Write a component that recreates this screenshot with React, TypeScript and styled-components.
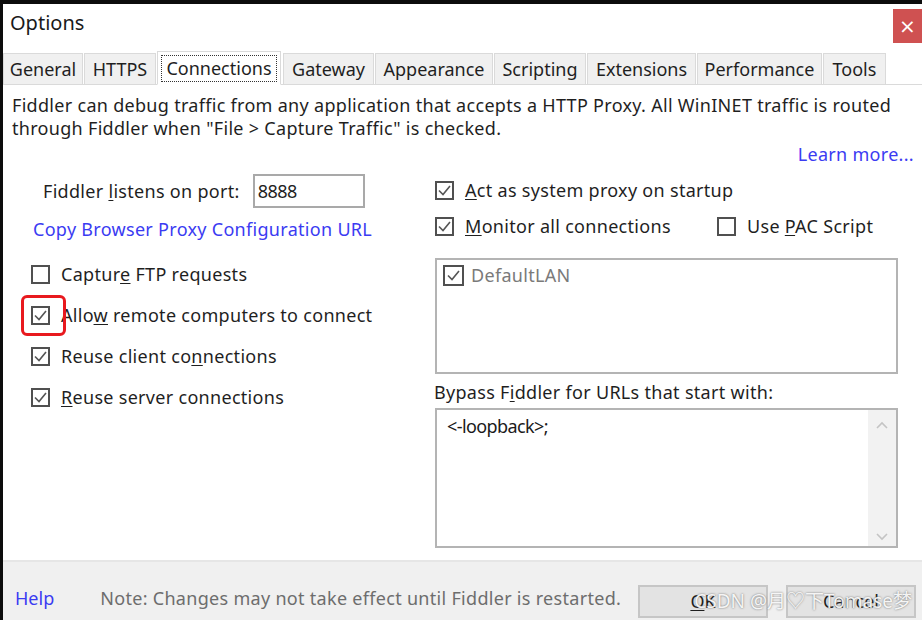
import React from "react";
import styled, { createGlobalStyle } from "styled-components";

const GlobalStyle = createGlobalStyle`
  html, body {
    margin: 0;
    padding: 0;
    background: #0c0c0c;
  }
  body {
    font-family: "Noto Sans", "Open Sans", sans-serif;
    color: #1f1f1f;
  }
`;

const Window = styled.div`
  position: relative;
  margin: 4px 0 0 3px;
  width: 919px;
  height: 616px;
  background: #ffffff;
  display: flex;
  flex-direction: column;
  overflow: hidden;
`;

const TitleBar = styled.div`
  height: 48px;
  display: flex;
  align-items: flex-start;
`;

const Title = styled.div`
  font-size: 20px;
  padding: 5px 0 0 7px;
  color: #1a1a1a;
`;

const CloseButton = styled.div`
  margin-left: auto;
  margin-top: 5px;
  width: 29px;
  height: 34px;
  background: #cf5151;
  color: #fff;
  font-size: 20px;
  display: flex;
  align-items: center;
  justify-content: center;
  font-family: "DejaVu Sans", sans-serif;
`;

const TabStrip = styled.div`
  height: 32px;
  display: flex;
  align-items: flex-end;
  border-bottom: 1px solid #dadada;
`;

const Tab = styled.div<{ $active?: boolean; $w: number }>`
  width: ${(p) => p.$w}px;
  height: ${(p) => (p.$active ? 34 : 31)}px;
  box-sizing: border-box;
  background: ${(p) => (p.$active ? "#ffffff" : "#f0f0f0")};
  border: 1px solid #dadada;
  border-bottom: ${(p) => (p.$active ? "1px solid #ffffff" : "none")};
  margin-right: ${(p) => (p.$active ? 2 : 1)}px;
  margin-bottom: ${(p) => (p.$active ? -1 : 0)}px;
  font-size: 18px;
  display: flex;
  align-items: center;
  justify-content: center;
  color: #1f1f1f;
  position: relative;
`;

const FocusBox = styled.span`
  border: 1px dotted #333;
  padding: 0 4px 1px;
  line-height: 24px;
`;

const Body = styled.div`
  flex: 1;
  padding: 9px 8px 0 9px;
  display: flex;
  flex-direction: column;
  letter-spacing: 0.3px;
`;

const Description = styled.p`
  margin: 0;
  font-size: 18px;
  line-height: 23px;
`;

const LearnRow = styled.div`
  display: flex;
  justify-content: flex-end;
  margin-top: 3px;
`;

const LinkText = styled.span`
  color: #3b3bf2;
  font-size: 18px;
  line-height: 22px;
`;

const Columns = styled.div`
  display: grid;
  grid-template-columns: 423px 463px;
  margin-top: 9px;
`;

const LeftColumn = styled.div`
  display: flex;
  flex-direction: column;
  padding-left: 19px;
`;

const PortRow = styled.div`
  display: flex;
  align-items: center;
  padding-left: 12px;
  font-size: 18px;
`;

const PortInput = styled.div`
  margin-left: 13px;
  width: 112px;
  height: 34px;
  box-sizing: border-box;
  border: 2px solid #a9a9a9;
  padding-left: 3px;
  display: flex;
  align-items: center;
  font-size: 18px;
  letter-spacing: -0.5px;
`;

const CopyLink = styled(LinkText)`
  margin-top: 10px;
  padding-left: 2px;
`;

const CheckList = styled.div`
  display: flex;
  flex-direction: column;
  gap: 19px;
  margin-top: 23px;
`;

const CheckRow = styled.label<{ $muted?: boolean }>`
  display: flex;
  align-items: center;
  gap: 11px;
  font-size: 18px;
  line-height: 22px;
  color: ${(p) => (p.$muted ? "#7a7a7a" : "#1f1f1f")};
  position: relative;
`;

const Box = styled.span<{ $size?: number }>`
  width: ${(p) => p.$size ?? 19}px;
  height: ${(p) => p.$size ?? 19}px;
  box-sizing: border-box;
  border: 2px solid #505050;
  background: #fff;
  display: flex;
  align-items: center;
  justify-content: center;
  flex-shrink: 0;
`;

const Highlight = styled.span`
  position: absolute;
  left: -10px;
  top: -9px;
  width: 45px;
  height: 41px;
  box-sizing: border-box;
  border: 3px solid #e8191e;
  border-radius: 6px;
`;

const RightColumn = styled.div`
  display: flex;
  flex-direction: column;
`;

const RightRow = styled.div<{ $first?: boolean }>`
  display: flex;
  align-items: center;
  margin-top: ${(p) => (p.$first ? 5 : 14)}px;
`;

const PacSlot = styled.div`
  margin-left: auto;
  width: 181px;
`;

const ListBox = styled.div`
  margin-top: 21px;
  height: 116px;
  box-sizing: border-box;
  border: 2px solid #b4b4b4;
  padding: 4px 6px;
`;

const FieldLabel = styled.div`
  margin-top: 6px;
  font-size: 18px;
  line-height: 24px;
  margin-left: -1px;
`;

const TextArea = styled.div`
  margin-top: 4px;
  height: 140px;
  box-sizing: border-box;
  border: 2px solid #b4b4b4;
  display: flex;
`;

const TextContent = styled.div`
  flex: 1;
  padding: 4px 10px;
  font-size: 18px;
  letter-spacing: -0.6px;
  color: #1a1a1a;
`;

const ScrollLane = styled.div`
  width: 28px;
  background: #f2f2f2;
  display: flex;
  flex-direction: column;
  justify-content: space-between;
  align-items: center;
  padding: 10px 0 4px;
`;

const Footer = styled.div`
  height: 58px;
  border-top: 2px solid #e6e6e6;
  background: #f0f0f0;
  display: flex;
  align-items: center;
  padding: 0 6px 0 12px;
  margin-top: auto;
  position: relative;
`;

const HelpLink = styled(LinkText)`
  margin-right: 46px;
  margin-top: 14px;
`;

const Note = styled.span`
  font-size: 18px;
  color: #6d6d6d;
  margin-top: 14px;
  letter-spacing: 0.3px;
`;

const Button = styled.div`
  width: 130px;
  height: 33px;
  box-sizing: border-box;
  border: 2px solid #c6c6c6;
  background: #e3e3e3;
  display: flex;
  align-items: center;
  justify-content: center;
  font-size: 18px;
  margin-top: 20px;
`;

const ButtonGroup = styled.div`
  margin-left: auto;
  display: flex;
  gap: 18px;
`;

const Watermark = styled.div`
  position: absolute;
  right: 10px;
  bottom: 6px;
  font-size: 19px;
  color: rgba(255, 255, 255, 0.92);
  text-shadow: 0 0 2px rgba(90, 90, 90, 0.9);
  font-family: "Noto Sans", "Noto Sans CJK SC", sans-serif;
`;

const Check = ({ color = "#555" }: { color?: string }) => (
  <svg width="15" height="15" viewBox="0 0 15 15">
    <polyline points="2,7.5 6,11.5 13,3" fill="none" stroke={color} strokeWidth="1.6" />
  </svg>
);

const Chevron = ({ up }: { up?: boolean }) => (
  <svg width="14" height="10" viewBox="0 0 14 10">
    <polyline
      points={up ? "2,8 7,3 12,8" : "2,2 7,7 12,2"}
      fill="none"
      stroke="#c4c4c4"
      strokeWidth="1.6"
    />
  </svg>
);

const U = styled.span`
  text-decoration: underline;
  text-underline-offset: 2px;
`;

const tabs: [string, number][] = [
  ["General", 80],
  ["HTTPS", 72],
  ["Connections", 124],
  ["Gateway", 91],
  ["Appearance", 118],
  ["Scripting", 92],
  ["Extensions", 109],
  ["Performance", 125],
  ["Tools", 63],
];

const App = () => {
  return (
    <>
      <GlobalStyle />
      <Window>
        <TitleBar>
          <Title>Options</Title>
          <CloseButton>×</CloseButton>
        </TitleBar>

        <TabStrip>
          {tabs.map(([name, w]) => (
            <Tab key={name} $w={w} $active={name === "Connections"}>
              {name === "Connections" ? <FocusBox>{name}</FocusBox> : name}
            </Tab>
          ))}
        </TabStrip>

        <Body>
          <Description>
            Fiddler can debug traffic from any application that accepts a HTTP Proxy. All WinINET traffic is routed
            <br />
            through Fiddler when "File &gt; Capture Traffic" is checked.
          </Description>
          <LearnRow>
            <LinkText>Learn more...</LinkText>
          </LearnRow>

          <Columns>
            <LeftColumn>
              <PortRow>
                <span>
                  Fiddler <U>l</U>istens on port:
                </span>
                <PortInput>8888</PortInput>
              </PortRow>
              <CopyLink>Copy Browser Proxy Configuration URL</CopyLink>

              <CheckList>
                <CheckRow>
                  <Box />
                  <span>
                    Captur<U>e</U> FTP requests
                  </span>
                </CheckRow>
                <CheckRow>
                  <Box>
                    <Check />
                  </Box>
                  <Highlight />
                  <span>
                    Allo<U>w</U> remote computers to connect
                  </span>
                </CheckRow>
                <CheckRow>
                  <Box>
                    <Check />
                  </Box>
                  <span>
                    Reuse client co<U>n</U>nections
                  </span>
                </CheckRow>
                <CheckRow>
                  <Box>
                    <Check />
                  </Box>
                  <span>
                    <U>R</U>euse server connections
                  </span>
                </CheckRow>
              </CheckList>
            </LeftColumn>

            <RightColumn>
              <RightRow $first>
                <CheckRow>
                  <Box>
                    <Check />
                  </Box>
                  <span>
                    <U>A</U>ct as system proxy on startup
                  </span>
                </CheckRow>
              </RightRow>
              <RightRow>
                <CheckRow>
                  <Box>
                    <Check />
                  </Box>
                  <span>
                    <U>M</U>onitor all connections
                  </span>
                </CheckRow>
                <PacSlot>
                  <CheckRow>
                    <Box />
                    <span>
                      Use <U>P</U>AC Script
                    </span>
                  </CheckRow>
                </PacSlot>
              </RightRow>

              <ListBox>
                <CheckRow $muted>
                  <Box $size={21}>
                    <Check />
                  </Box>
                  <span style={{ marginLeft: -4 }}>DefaultLAN</span>
                </CheckRow>
              </ListBox>

              <FieldLabel>
                Bypass F<U>i</U>ddler for URLs that start with:
              </FieldLabel>
              <TextArea>
                <TextContent>&lt;-loopback&gt;;</TextContent>
                <ScrollLane>
                  <Chevron up />
                  <Chevron />
                </ScrollLane>
              </TextArea>
            </RightColumn>
          </Columns>
        </Body>

        <Footer>
          <HelpLink>Help</HelpLink>
          <Note>Note: Changes may not take effect until Fiddler is restarted.</Note>
          <ButtonGroup>
            <Button>
              <U>O</U>K
            </Button>
            <Button>Cancel</Button>
          </ButtonGroup>
          <Watermark>CSDN @月♡下Tomase梦</Watermark>
        </Footer>
      </Window>
    </>
  );
};

export default App;
